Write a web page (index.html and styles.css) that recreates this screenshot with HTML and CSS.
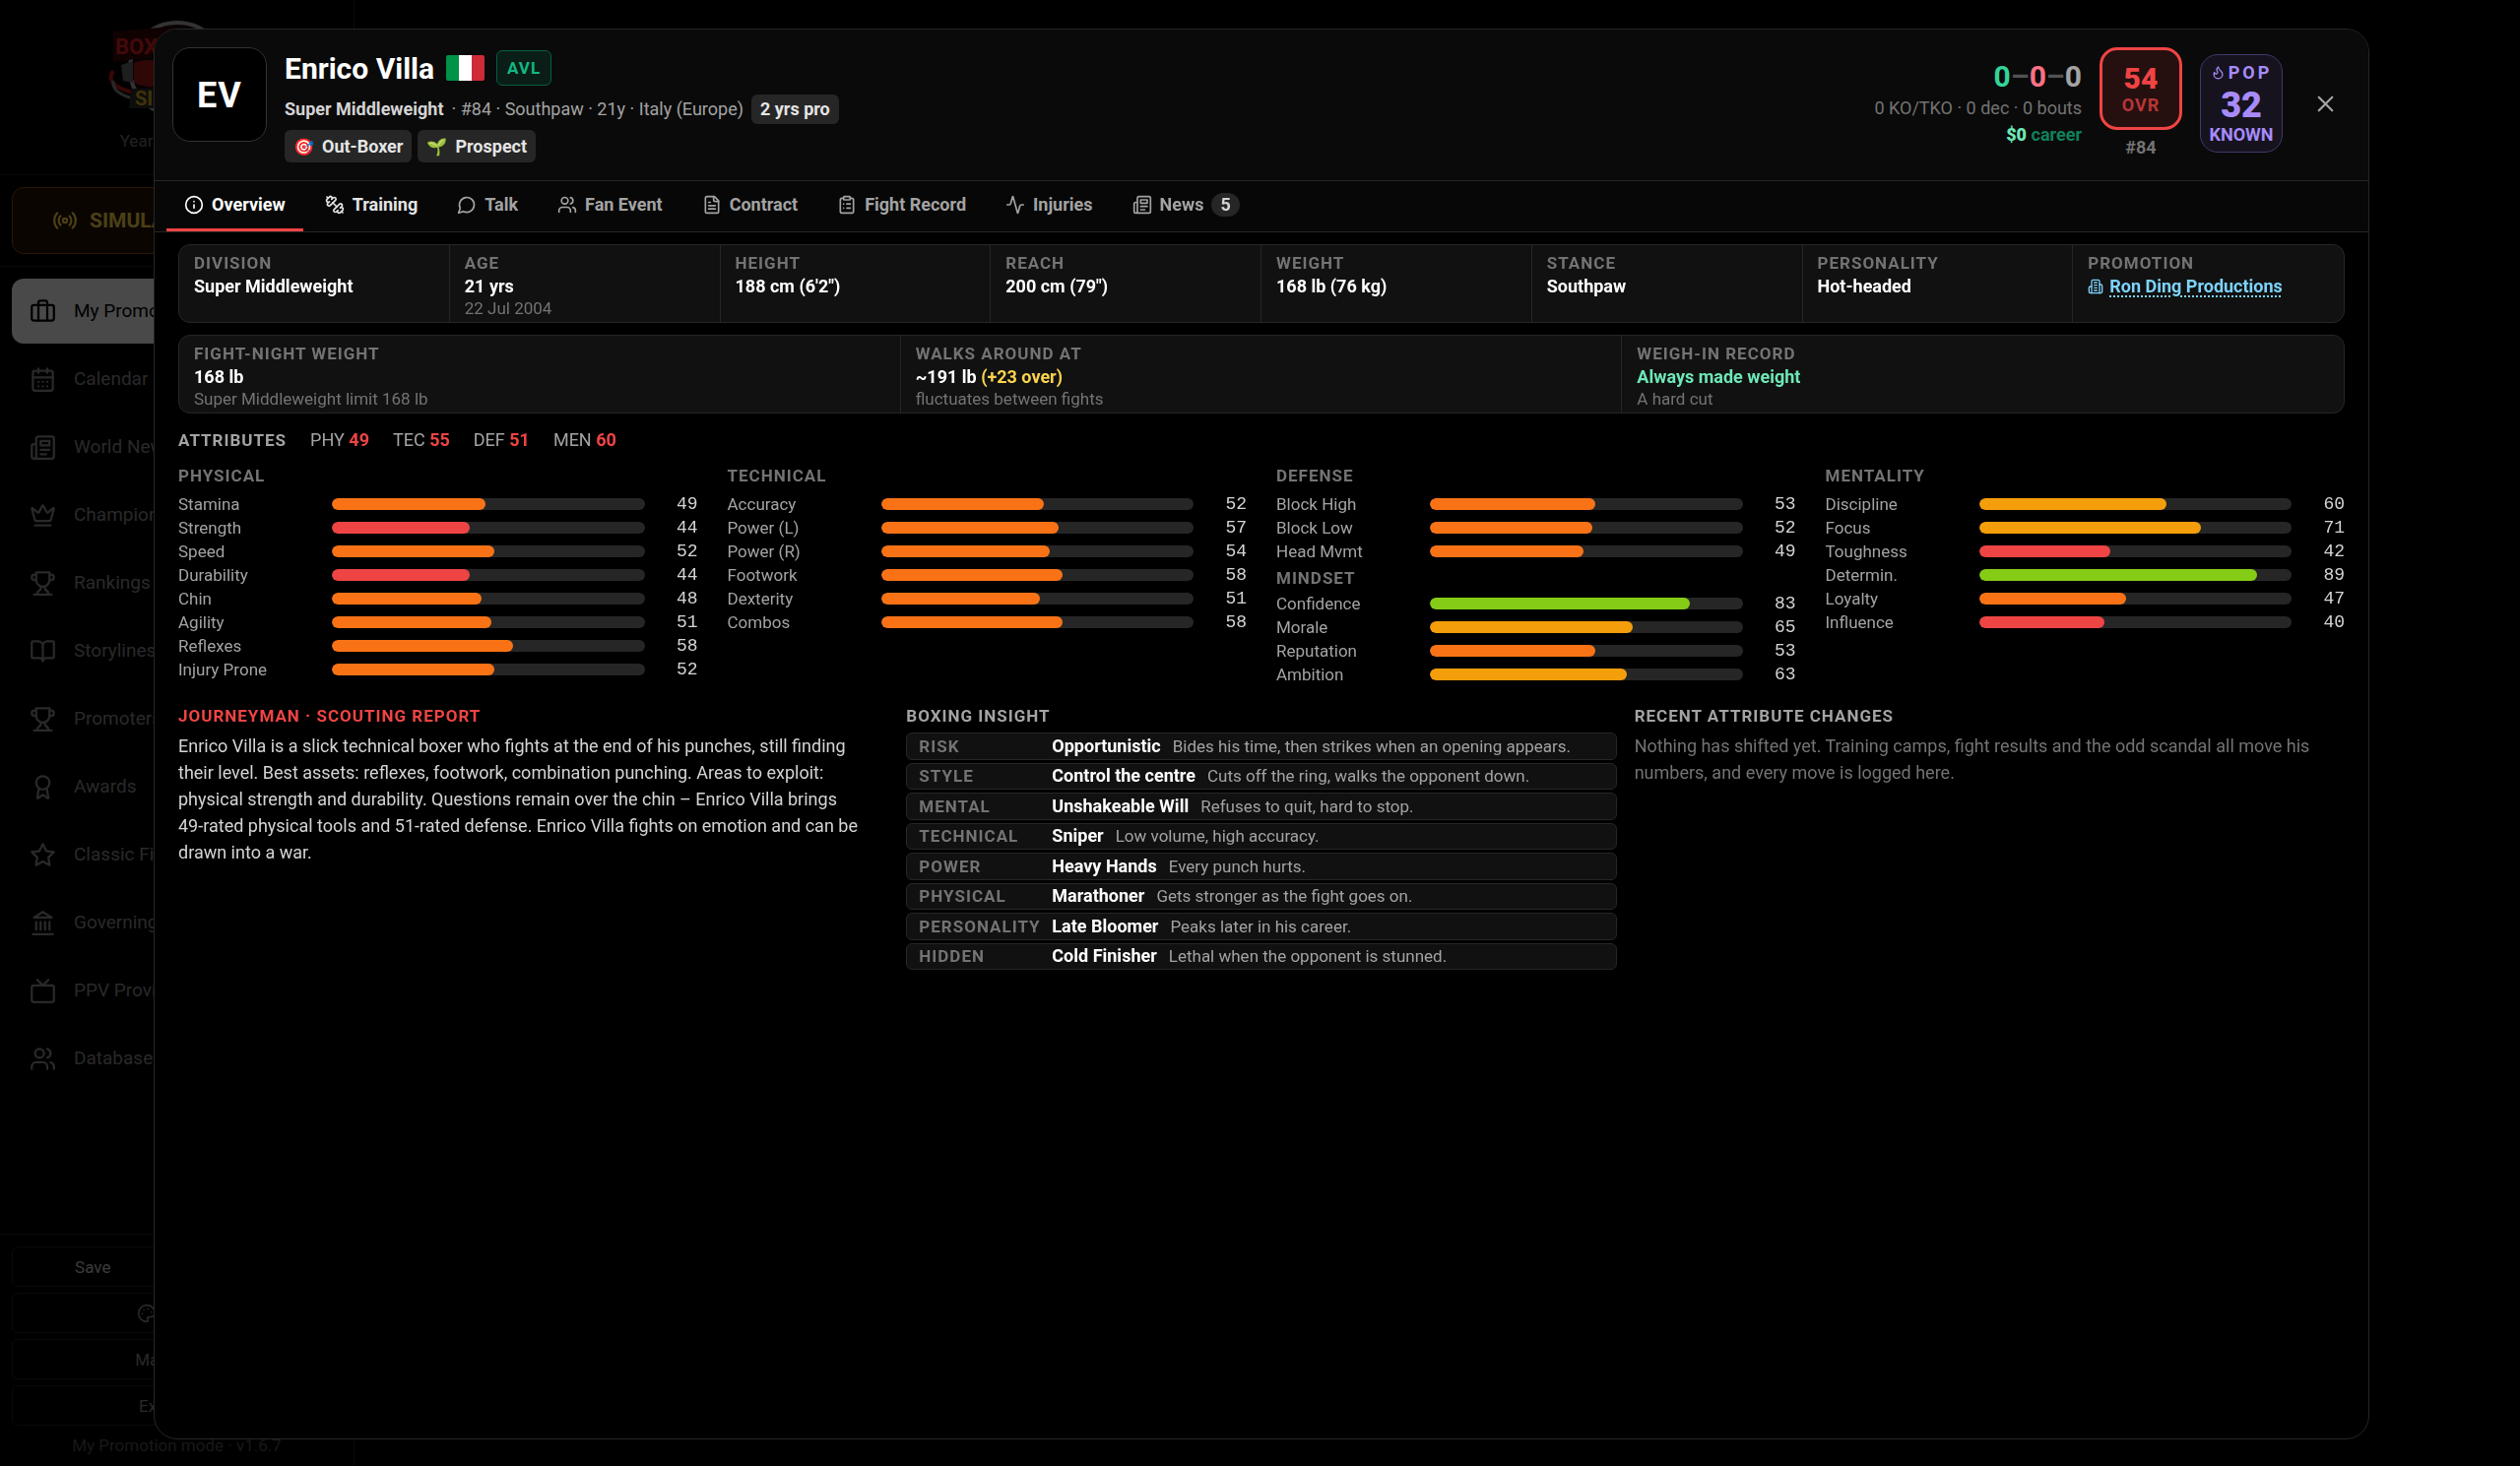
FILE: index.html
```html
<!DOCTYPE html>
<html lang="en">
<head>
    <meta charset="UTF-8">
    <meta name="viewport" content="width=device-width, initial-scale=1.0">
    <title>Enrico Villa - Boxing Sim</title>
    <link rel="stylesheet" href="styles.css">
</head>
<body>
    <!-- Icon sprite -->
    <svg class="sprite" aria-hidden="true">
        <symbol id="i-info" viewBox="0 0 24 24"><circle cx="12" cy="12" r="10"/><path d="M12 16v-4M12 8h.01"/></symbol>
        <symbol id="i-dumbbell" viewBox="0 0 24 24"><path d="M14.4 14.4 9.6 9.6"/><path d="M18.657 21.485a2 2 0 1 1-2.829-2.828l-1.767 1.768a2 2 0 1 1-2.829-2.829l6.364-6.364a2 2 0 1 1 2.829 2.829l-1.768 1.767a2 2 0 1 1 2.828 2.829z"/><path d="m21.5 21.5-1.4-1.4M3.9 3.9 2.5 2.5"/><path d="M6.404 12.768a2 2 0 1 1-2.829-2.829l1.768-1.767a2 2 0 1 1-2.828-2.829l2.828-2.828a2 2 0 1 1 2.829 2.828l1.767-1.768a2 2 0 1 1 2.829 2.829z"/></symbol>
        <symbol id="i-talk" viewBox="0 0 24 24"><path d="M7.9 20A9 9 0 1 0 4 16.1L2 22Z"/></symbol>
        <symbol id="i-users" viewBox="0 0 24 24"><path d="M16 21v-2a4 4 0 0 0-4-4H6a4 4 0 0 0-4 4v2"/><circle cx="9" cy="7" r="4"/><path d="M22 21v-2a4 4 0 0 0-3-3.87M16 3.13a4 4 0 0 1 0 7.75"/></symbol>
        <symbol id="i-file" viewBox="0 0 24 24"><path d="M15 2H6a2 2 0 0 0-2 2v16a2 2 0 0 0 2 2h12a2 2 0 0 0 2-2V7Z"/><path d="M14 2v4a2 2 0 0 0 2 2h4M10 9H8M16 13H8M16 17H8"/></symbol>
        <symbol id="i-clipboard" viewBox="0 0 24 24"><rect x="8" y="2" width="8" height="4" rx="1"/><path d="M16 4h2a2 2 0 0 1 2 2v14a2 2 0 0 1-2 2H6a2 2 0 0 1-2-2V6a2 2 0 0 1 2-2h2M12 11h4M12 16h4M8 11h.01M8 16h.01"/></symbol>
        <symbol id="i-activity" viewBox="0 0 24 24"><path d="M22 12h-2.48a2 2 0 0 0-1.93 1.46l-2.35 8.36a.25.25 0 0 1-.48 0L9.24 2.18a.25.25 0 0 0-.48 0l-2.35 8.36A2 2 0 0 1 4.49 12H2"/></symbol>
        <symbol id="i-news" viewBox="0 0 24 24"><path d="M4 22h16a2 2 0 0 0 2-2V4a2 2 0 0 0-2-2H8a2 2 0 0 0-2 2v16a2 2 0 0 1-2 2Zm0 0a2 2 0 0 1-2-2v-9c0-1.1.9-2 2-2h2M18 14h-8M15 18h-5"/><path d="M10 6h8v4h-8z"/></symbol>
        <symbol id="i-flame" viewBox="0 0 24 24"><path d="M8.5 14.5A2.5 2.5 0 0 0 11 12c0-1.38-.5-2-1-3-1.072-2.143-.224-4.054 2-6 .5 2.5 2 4.9 4 6.5 2 1.6 3 3.5 3 5.5a7 7 0 1 1-14 0c0-1.153.433-2.294 1-3a2.5 2.5 0 0 0 2.5 2.5z"/></symbol>
        <symbol id="i-x" viewBox="0 0 24 24"><path d="M18 6 6 18M6 6l12 12"/></symbol>
        <symbol id="i-building" viewBox="0 0 24 24"><path d="M6 22V4a2 2 0 0 1 2-2h8a2 2 0 0 1 2 2v18Z"/><path d="M6 12H4a2 2 0 0 0-2 2v6a2 2 0 0 0 2 2h2M18 9h2a2 2 0 0 1 2 2v9a2 2 0 0 1-2 2h-2M10 6h4M10 10h4M10 14h4M10 18h4"/></symbol>
        <symbol id="i-radio" viewBox="0 0 24 24"><path d="M4.9 19.1C1 15.2 1 8.8 4.9 4.9M7.8 16.2c-2.3-2.3-2.3-6.1 0-8.5"/><circle cx="12" cy="12" r="2"/><path d="M16.2 7.8c2.3 2.3 2.3 6.1 0 8.5M19.1 4.9C23 8.8 23 15.1 19.1 19"/></symbol>
        <symbol id="i-luggage" viewBox="0 0 24 24"><path d="M16 20V4a2 2 0 0 0-2-2h-4a2 2 0 0 0-2 2v16"/><rect x="2" y="6" width="20" height="14" rx="2"/></symbol>
        <symbol id="i-calendar" viewBox="0 0 24 24"><path d="M8 2v4M16 2v4"/><rect x="3" y="4" width="18" height="18" rx="2"/><path d="M3 10h18M8 14h.01M12 14h.01M16 14h.01M8 18h.01M12 18h.01M16 18h.01"/></symbol>
        <symbol id="i-crown" viewBox="0 0 24 24"><path d="M11.562 3.266a.5.5 0 0 1 .876 0L15.39 8.87a1 1 0 0 0 1.516.294L21.183 5.5a.5.5 0 0 1 .798.519l-2.834 10.246a1 1 0 0 1-.956.734H5.81a1 1 0 0 1-.957-.734L2.02 6.02a.5.5 0 0 1 .798-.519l4.276 3.664a1 1 0 0 0 1.516-.294zM5 21h14"/></symbol>
        <symbol id="i-trophy" viewBox="0 0 24 24"><path d="M6 9H4.500a2.500 2.500 0 0 1 0-5H6M18 9h1.500a2.500 2.500 0 0 0 0-5H18M4 22h16M10 14.660V17c0 .55-.47.98-.97 1.210C7.850 18.750 7 20.240 7 22M14 14.660V17c0 .55.47.98.97 1.210C16.150 18.750 17 20.240 17 22M18 2H6v7a6 6 0 0 0 12 0V2Z"/></symbol>
        <symbol id="i-book" viewBox="0 0 24 24"><path d="M12 7v14M3 18a1 1 0 0 1-1-1V4a1 1 0 0 1 1-1h5a4 4 0 0 1 4 4 4 4 0 0 1 4-4h5a1 1 0 0 1 1 1v13a1 1 0 0 1-1 1h-6a3 3 0 0 0-3 3 3 3 0 0 0-3-3z"/></symbol>
        <symbol id="i-award" viewBox="0 0 24 24"><path d="m15.477 12.890 1.515 8.526a.5.5 0 0 1-.81.470l-3.580-2.687a1 1 0 0 0-1.197 0l-3.586 2.686a.5.5 0 0 1-.81-.469l1.514-8.526"/><circle cx="12" cy="8" r="6"/></symbol>
        <symbol id="i-star" viewBox="0 0 24 24"><path d="m12 2 3.090 6.260L22 9.270l-5 4.870 1.180 6.880L12 17.770l-6.180 3.250L7 14.140 2 9.270l6.910-1.010z"/></symbol>
        <symbol id="i-landmark" viewBox="0 0 24 24"><path d="M3 22h18M6 18v-7M10 18v-7M14 18v-7M18 18v-7M12 2l8 5H4z"/></symbol>
        <symbol id="i-tv" viewBox="0 0 24 24"><rect x="2" y="7" width="20" height="15" rx="2"/><path d="m17 2-5 5-5-5"/></symbol>
        <symbol id="i-palette" viewBox="0 0 24 24"><path d="M13.500 6.500h.01M17.500 10.500h.01M8.500 7.500h.01M6.500 12.500h.01"/><path d="M12 2C6.500 2 2 6.500 2 12s4.500 10 10 10c.926 0 1.648-.746 1.648-1.688 0-.437-.18-.835-.437-1.125-.29-.289-.438-.652-.438-1.125a1.640 1.640 0 0 1 1.668-1.668h1.996c3.051 0 5.555-2.503 5.555-5.554C21.965 6.012 17.461 2 12 2z"/></symbol>
    </svg>

    <!-- Sidebar -->
    <aside class="sidebar">
        <div class="brand">
            <svg class="brand-logo" viewBox="0 0 140 105" role="img" aria-label="Boxing Sim">
                <ellipse cx="70" cy="50" rx="48" ry="47" fill="#200c0c" stroke="#aaa" stroke-width="4"/>
                <path d="M5 52q-10 14 20 22l100 3" fill="none" stroke="#c01818" stroke-width="4"/>
                <path d="M5 62q-2 12 20 18" fill="none" stroke="#888" stroke-width="3"/>
                <path d="M13 46l12-4v22l-10-2z" fill="#666"/>
                <path d="M26 44q14-6 34 0v24q-20 2-34-4z" fill="#a01a1a"/>
                <path d="M5 12l60-5v28l-60 8z" fill="#3a0808"/>
                <text x="7" y="35" class="logo-red">BOXING</text>
                <path d="M23 70h90v20H21z" fill="#2c2c2c"/>
                <text x="27" y="87" class="logo-gold">SIM</text>
            </svg>
            <p class="brand-year">Year 1 · Week 1</p>
        </div>
        <div class="simulate">
            <button type="button" class="simulate-btn"><svg class="icon"><use href="#i-radio"/></svg>SIMULATE WEEK</button>
        </div>
        <nav class="menu">
            <a href="#" class="active"><svg class="icon"><use href="#i-luggage"/></svg>My Promotion</a>
            <a href="#"><svg class="icon"><use href="#i-calendar"/></svg>Calendar</a>
            <a href="#"><svg class="icon"><use href="#i-news"/></svg>World News</a>
            <a href="#"><svg class="icon"><use href="#i-crown"/></svg>Champions</a>
            <a href="#"><svg class="icon"><use href="#i-trophy"/></svg>Rankings</a>
            <a href="#"><svg class="icon"><use href="#i-book"/></svg>Storylines</a>
            <a href="#"><svg class="icon"><use href="#i-trophy"/></svg>Promoters</a>
            <a href="#"><svg class="icon"><use href="#i-award"/></svg>Awards</a>
            <a href="#"><svg class="icon"><use href="#i-star"/></svg>Classic Fights</a>
            <a href="#"><svg class="icon"><use href="#i-landmark"/></svg>Governing Bodies</a>
            <a href="#"><svg class="icon"><use href="#i-tv"/></svg>PPV Providers</a>
            <a href="#"><svg class="icon"><use href="#i-users"/></svg>Database</a>
        </nav>
        <div class="side-footer">
            <div class="save-row">
                <button type="button" class="save-btn">Save</button>
                <button type="button">Load</button>
            </div>
            <button type="button"><svg class="icon"><use href="#i-palette"/></svg>Theme</button>
            <button type="button">Main Menu</button>
            <button type="button">Exit Game</button>
            <p>My Promotion mode · v1.6.7</p>
        </div>
    </aside>

    <!-- Fighter modal -->
    <div class="overlay">
        <main class="modal">
            <header class="head">
                <div class="avatar">EV</div>
                <div class="who">
                    <div class="name-row">
                        <h1>Enrico Villa</h1>
                        <span class="flag" role="img" aria-label="Italy"></span>
                        <span class="avl">AVL</span>
                    </div>
                    <div class="meta-row">
                        <strong>Super Middleweight</strong>
                        <span>· #84 · Southpaw · 21y · Italy (Europe)</span>
                        <span class="tag">2 yrs pro</span>
                    </div>
                    <div class="chips">
                        <span class="chip"><i>🎯</i>Out-Boxer</span>
                        <span class="chip"><i>🌱</i>Prospect</span>
                    </div>
                </div>
                <div class="summary">
                    <div class="record">
                        <p class="wld"><span class="w">0</span>–<span class="l">0</span>–<span class="d">0</span></p>
                        <p class="bouts">0 KO/TKO · 0 dec · 0 bouts</p>
                        <p class="career"><b>$0</b> career</p>
                    </div>
                    <div class="ovr">
                        <div class="ovr-box"><b>54</b><span>OVR</span></div>
                        <p>#84</p>
                    </div>
                    <div class="pop">
                        <span class="pop-label"><svg class="icon"><use href="#i-flame"/></svg>POP</span>
                        <b>32</b>
                        <span class="pop-tier">KNOWN</span>
                    </div>
                    <button type="button" class="close" aria-label="Close"><svg class="icon"><use href="#i-x"/></svg></button>
                </div>
            </header>

            <nav class="tabs">
                <button type="button" class="active"><svg class="icon"><use href="#i-info"/></svg>Overview</button>
                <button type="button" class="bright"><svg class="icon"><use href="#i-dumbbell"/></svg>Training</button>
                <button type="button"><svg class="icon"><use href="#i-talk"/></svg>Talk</button>
                <button type="button"><svg class="icon"><use href="#i-users"/></svg>Fan Event</button>
                <button type="button"><svg class="icon"><use href="#i-file"/></svg>Contract</button>
                <button type="button"><svg class="icon"><use href="#i-clipboard"/></svg>Fight Record</button>
                <button type="button"><svg class="icon"><use href="#i-activity"/></svg>Injuries</button>
                <button type="button"><svg class="icon"><use href="#i-news"/></svg>News<span class="count">5</span></button>
            </nav>

            <div class="body">
                <dl class="facts facts-8">
                    <div><dt>DIVISION</dt><dd>Super Middleweight</dd></div>
                    <div><dt>AGE</dt><dd>21 yrs</dd><dd class="sub">22 Jul 2004</dd></div>
                    <div><dt>HEIGHT</dt><dd>188 cm (6'2")</dd></div>
                    <div><dt>REACH</dt><dd>200 cm (79")</dd></div>
                    <div><dt>WEIGHT</dt><dd>168 lb (76 kg)</dd></div>
                    <div><dt>STANCE</dt><dd>Southpaw</dd></div>
                    <div><dt>PERSONALITY</dt><dd>Hot-headed</dd></div>
                    <div><dt>PROMOTION</dt><dd class="promo"><svg class="icon"><use href="#i-building"/></svg><a href="#">Ron Ding Productions</a></dd></div>
                </dl>
                <dl class="facts facts-3">
                    <div><dt>FIGHT-NIGHT WEIGHT</dt><dd>168 lb</dd><dd class="sub">Super Middleweight limit 168 lb</dd></div>
                    <div><dt>WALKS AROUND AT</dt><dd>~191 lb <span class="over">(+23 over)</span></dd><dd class="sub">fluctuates between fights</dd></div>
                    <div><dt>WEIGH-IN RECORD</dt><dd class="good">Always made weight</dd><dd class="sub">A hard cut</dd></div>
                </dl>

                <div class="attr-head">
                    <h2>ATTRIBUTES</h2>
                    <span>PHY <b>49</b></span>
                    <span>TEC <b>55</b></span>
                    <span>DEF <b>51</b></span>
                    <span>MEN <b>60</b></span>
                </div>
                <div class="attrs" id="attrs"></div>

                <div class="reports">
                    <section>
                        <h2 class="red">JOURNEYMAN · SCOUTING REPORT</h2>
                        <p class="scout">
                            Enrico Villa is a slick technical boxer who fights at the end of his punches, still finding<br>
                            their level. Best assets: reflexes, footwork, combination punching. Areas to exploit:<br>
                            physical strength and durability. Questions remain over the chin – Enrico Villa brings<br>
                            49-rated physical tools and 51-rated defense. Enrico Villa fights on emotion and can be<br>
                            drawn into a war.
                        </p>
                    </section>
                    <section>
                        <h2>BOXING INSIGHT</h2>
                        <ul class="insight">
                            <li><span>RISK</span><b>Opportunistic</b><em>Bides his time, then strikes when an opening appears.</em></li>
                            <li><span>STYLE</span><b>Control the centre</b><em>Cuts off the ring, walks the opponent down.</em></li>
                            <li><span>MENTAL</span><b>Unshakeable Will</b><em>Refuses to quit, hard to stop.</em></li>
                            <li><span>TECHNICAL</span><b>Sniper</b><em>Low volume, high accuracy.</em></li>
                            <li><span>POWER</span><b>Heavy Hands</b><em>Every punch hurts.</em></li>
                            <li><span>PHYSICAL</span><b>Marathoner</b><em>Gets stronger as the fight goes on.</em></li>
                            <li><span>PERSONALITY</span><b>Late Bloomer</b><em>Peaks later in his career.</em></li>
                            <li><span>HIDDEN</span><b>Cold Finisher</b><em>Lethal when the opponent is stunned.</em></li>
                        </ul>
                    </section>
                    <section>
                        <h2>RECENT ATTRIBUTE CHANGES</h2>
                        <p class="empty">Nothing has shifted yet. Training camps, fight results and the odd scandal all move his numbers, and every move is logged here.</p>
                    </section>
                </div>
            </div>
        </main>
    </div>

    <script>
        // Attribute columns, each one holds one or more groups
        const columns = [
            [['PHYSICAL', [['Stamina', 49], ['Strength', 44], ['Speed', 52], ['Durability', 44], ['Chin', 48], ['Agility', 51], ['Reflexes', 58], ['Injury Prone', 52]]]],
            [['TECHNICAL', [['Accuracy', 52], ['Power (L)', 57], ['Power (R)', 54], ['Footwork', 58], ['Dexterity', 51], ['Combos', 58]]]],
            [['DEFENSE', [['Block High', 53], ['Block Low', 52], ['Head Mvmt', 49]]],
             ['MINDSET', [['Confidence', 83], ['Morale', 65], ['Reputation', 53], ['Ambition', 63]]]],
            [['MENTALITY', [['Discipline', 60], ['Focus', 71], ['Toughness', 42], ['Determin.', 89], ['Loyalty', 47], ['Influence', 40]]]]
        ];

        const tier = v => v >= 75 ? 'high' : v >= 60 ? 'good' : v >= 45 ? 'mid' : 'low';

        document.getElementById('attrs').innerHTML = columns.map(groups =>
            '<div class="attr-col">' + groups.map(([title, rows]) =>
                `<h3>${title}</h3>` + rows.map(([name, v]) =>
                    `<div class="attr"><span>${name}</span><div class="bar"><div class="fill ${tier(v)}" style="width:${v}%"></div></div><b>${v}</b></div>`
                ).join('')
            ).join('') + '</div>'
        ).join('');
    </script>
</body>
</html>
```
FILE: styles.css
```css
* {
    margin: 0;
    padding: 0;
    box-sizing: border-box;
}

body {
    min-height: 100vh;
    overflow: hidden;
    background: #000;
    color: #fff;
    font-family: Roboto, 'Liberation Sans', sans-serif;
    font-size: 18px;
    line-height: 24px;
}

button {
    font: inherit;
    color: inherit;
    background: none;
    border: none;
    cursor: pointer;
}

a {
    color: inherit;
    text-decoration: none;
}

.sprite {
    display: none;
}

.icon {
    flex: none;
    width: 20px;
    height: 20px;
    fill: none;
    stroke: currentColor;
    stroke-width: 2;
    stroke-linecap: round;
    stroke-linejoin: round;
}

/* Sidebar */
.sidebar {
    display: flex;
    flex-direction: column;
    width: 360px;
    height: 100vh;
    border-right: 1px solid #262626;
}

.brand {
    padding: 20px 0 22px;
    border-bottom: 1px solid #262626;
    text-align: center;
}

.brand-logo {
    display: block;
    width: 140px;
    height: 105px;
    margin: 0 auto 6px;
}

.logo-red,
.logo-gold {
    font-size: 22px;
    font-weight: bold;
    fill: #e02020;
}

.logo-gold {
    font-size: 20px;
    fill: #d4a820;
}

.brand-year {
    color: #737373;
    font-size: 17px;
}

.simulate {
    padding: 12px;
    border-bottom: 1px solid #262626;
}

.simulate-btn {
    display: flex;
    align-items: center;
    gap: 12px;
    width: 100%;
    height: 68px;
    padding: 0 40px;
    border: 1px solid #8a4a10;
    border-radius: 12px;
    background: #221200;
    color: #fcd34d;
    font-size: 21px;
    font-weight: bold;
}

.simulate-btn .icon {
    width: 26px;
    height: 26px;
}

.menu {
    display: flex;
    flex-direction: column;
    flex: 1;
    gap: 3px;
    padding: 12px;
}

.menu a {
    display: flex;
    align-items: center;
    gap: 18px;
    height: 66px;
    padding: 0 18px;
    border-radius: 12px;
    color: #8a8a8a;
    font-size: 19px;
}

.menu .active {
    background: #f5f5f5;
    color: #000;
}

.menu .icon {
    width: 27px;
    height: 27px;
}

.side-footer {
    display: flex;
    flex-direction: column;
    gap: 6px;
    padding: 12px 12px 9px;
    border-top: 1px solid #262626;
}

.side-footer button {
    display: flex;
    align-items: center;
    justify-content: center;
    gap: 8px;
    flex: 1;
    min-height: 41px;
    border: 1px solid #262626;
    border-radius: 6px;
    color: #8a8a8a;
    font-size: 17px;
}

.side-footer .save-btn {
    color: #c4c4c4;
}

.side-footer p {
    padding-top: 2px;
    color: #525252;
    font-size: 17px;
    text-align: center;
}

.save-row {
    display: flex;
    gap: 6px;
}

/* Modal */
.overlay {
    position: fixed;
    inset: 0;
    padding: 29px 153px 27px 156px;
    background: rgba(0, 0, 0, 0.7);
}

.modal {
    display: flex;
    flex-direction: column;
    height: 100%;
    overflow: hidden;
    border: 1px solid #262626;
    border-radius: 24px;
    background: #000;
}

.head {
    display: flex;
    align-items: flex-start;
    gap: 18px;
    padding: 18px;
    border-bottom: 1px solid #262626;
    background: #0a0a0a;
}

.avatar {
    display: flex;
    align-items: center;
    justify-content: center;
    width: 96px;
    height: 96px;
    padding-top: 2px;
    border: 1px solid #333;
    border-radius: 18px;
    background: #000;
    font-size: 36px;
    font-weight: bold;
    letter-spacing: 1px;
}

.who {
    display: flex;
    flex-direction: column;
    gap: 6px;
}

.name-row {
    display: flex;
    align-items: center;
    gap: 12px;
    height: 42px;
}

h1 {
    padding-top: 2px;
    font-size: 30px;
    line-height: 36px;
}

.flag {
    width: 39px;
    height: 26px;
    border-radius: 2px;
    background: linear-gradient(90deg, #009246 33%, #fff 33% 67%, #ce2b37 67%);
}

.avl {
    padding: 5px 10px;
    border: 1px solid #065f46;
    border-radius: 6px;
    background: #0a1d17;
    color: #10b981;
    font-size: 17px;
    font-weight: bold;
    letter-spacing: 1px;
}

.meta-row {
    display: flex;
    align-items: center;
    gap: 8px;
    color: #a3a3a3;
}

.meta-row strong {
    color: #d4d4d4;
}

.tag {
    padding: 3px 9px;
    border-radius: 6px;
    background: #262626;
    color: #e5e5e5;
    font-weight: bold;
}

.chips {
    display: flex;
    gap: 6px;
}

.chip {
    display: flex;
    align-items: center;
    gap: 8px;
    height: 33px;
    padding: 0 9px;
    border-radius: 6px;
    background: #262626;
    color: #e5e5e5;
    font-weight: bold;
}

.chip i {
    font-size: 17px;
    font-style: normal;
}

/* Record, rating and popularity */
.summary {
    display: flex;
    align-items: center;
    gap: 18px;
    margin-left: auto;
}

.record {
    color: #737373;
    text-align: right;
}

.wld {
    color: #525252;
    font-size: 30px;
    font-weight: bold;
    line-height: 36px;
}

.w {
    color: #34d399;
}

.l {
    color: #fb7185;
}

.d {
    color: #a3a3a3;
}

.bouts,
.career {
    line-height: 27px;
}

.career {
    color: #10805a;
    font-weight: bold;
}

.career b {
    color: #6ee7b7;
}

.ovr {
    color: #737373;
    font-weight: bold;
    text-align: center;
}

.ovr-box {
    display: flex;
    flex-direction: column;
    align-items: center;
    justify-content: center;
    width: 84px;
    height: 84px;
    margin-bottom: 6px;
    padding-top: 3px;
    border: 3px solid #ef4444;
    border-radius: 18px;
    background: #260f0f;
    color: #ef4444;
}

.ovr-box b {
    font-size: 30px;
    line-height: 30px;
}

.ovr-box span {
    color: #b73636;
    letter-spacing: 1px;
}

.pop {
    display: flex;
    flex-direction: column;
    align-items: center;
    justify-content: center;
    width: 84px;
    height: 100px;
    border: 1px solid #44386b;
    border-radius: 18px;
    background: #16131f;
    color: #a78bfa;
    font-weight: bold;
}

.pop b {
    padding-top: 3px;
    font-size: 36px;
    line-height: 36px;
}

.pop-label {
    display: flex;
    align-items: center;
    gap: 3px;
    letter-spacing: 3px;
}

.pop-label .icon {
    width: 15px;
    height: 15px;
}

.close {
    display: flex;
    align-items: center;
    justify-content: center;
    width: 51px;
    height: 51px;
    color: #a3a3a3;
}

.close .icon {
    width: 27px;
    height: 27px;
}

/* Tabs */
.tabs {
    display: flex;
    gap: 4px;
    padding: 0 12px;
    border-bottom: 1px solid #262626;
    background: #070707;
}

.tabs button {
    display: flex;
    align-items: center;
    gap: 8px;
    height: 51px;
    padding: 0 18px;
    border-bottom: 3px solid transparent;
    color: #a3a3a3;
    font-weight: bold;
}

.tabs .active {
    border-color: #ef4444;
    color: #fff;
}

.tabs .bright {
    color: #e5e5e5;
}

.count {
    padding: 0 9px;
    border-radius: 12px;
    background: #262626;
    color: #d4d4d4;
}

.body {
    display: flex;
    flex-direction: column;
    gap: 12px;
    padding: 12px 24px;
}

/* Fact strips */
.facts {
    display: grid;
    overflow: hidden;
    border: 1px solid #262626;
    border-radius: 12px;
    background: #111;
}

.facts-8 {
    grid-template-columns: repeat(8, 1fr);
}

.facts-3 {
    grid-template-columns: repeat(3, 1fr);
}

.facts > div {
    padding: 6px 15px 3px;
    border-right: 1px solid #262626;
}

.facts > div:last-child {
    border-right: none;
}

dt,
h2,
h3 {
    font-size: 17px;
    font-weight: bold;
    line-height: 24px;
    letter-spacing: 1px;
}

dt,
h3 {
    color: #737373;
}

h2 {
    color: #a3a3a3;
}

dd {
    font-weight: bold;
}

.sub {
    color: #737373;
    font-size: 17px;
    font-weight: normal;
    line-height: 21px;
}

.over {
    color: #fcd34d;
}

.good {
    color: #6ee7b7;
}

.promo {
    display: flex;
    align-items: center;
    gap: 6px;
    color: #7dd3fc;
}

.promo .icon {
    width: 16px;
    height: 16px;
}

.promo a {
    text-decoration: underline dotted;
    text-underline-offset: 4px;
}

/* Attributes */
.attr-head {
    display: flex;
    align-items: center;
    gap: 24px;
    line-height: 30px;
    color: #a3a3a3;
}

.attr-head b {
    color: #ef4444;
}

.attrs {
    display: grid;
    grid-template-columns: repeat(4, 1fr);
    gap: 30px;
    margin-top: -3px;
}

.attr-col h3 {
    margin-bottom: 5px;
}

.attr + h3 {
    margin: 3px 0 2px;
}

.attr {
    display: grid;
    grid-template-columns: 144px 1fr 42px;
    align-items: center;
    gap: 12px;
    height: 24px;
    color: #a3a3a3;
    font-size: 17px;
}

.attr b {
    color: #d4d4d4;
    font-family: 'Liberation Mono', monospace;
    font-size: 18px;
    font-weight: normal;
    text-align: right;
}

.bar {
    height: 12px;
    overflow: hidden;
    border-radius: 6px;
    background: #262626;
}

.fill {
    height: 100%;
    border-radius: 6px;
}

.low {
    background: #ef4444;
}

.mid {
    background: #f97316;
}

.good.fill {
    background: #f59e0b;
}

.high {
    background: #84cc16;
}

/* Reports */
.reports {
    display: grid;
    grid-template-columns: repeat(3, 1fr);
    gap: 18px;
    margin-top: 6px;
}

.reports h2 {
    margin-bottom: 5px;
}

.reports .red {
    color: #ef4444;
}

.scout,
.empty {
    color: #d4d4d4;
    line-height: 27px;
}

.empty {
    color: #737373;
}

.insight {
    display: grid;
    grid-auto-rows: 1fr;
    gap: 3px;
    min-height: 241px;
    list-style: none;
}

.insight li {
    display: flex;
    align-items: center;
    gap: 12px;
    padding: 0 12px;
    border: 1px solid #262626;
    border-radius: 6px;
    background: #111;
}

.insight span {
    width: 123px;
    color: #737373;
    font-size: 17px;
    font-weight: bold;
    letter-spacing: 1px;
}

.insight em {
    color: #a3a3a3;
    font-size: 17px;
    font-style: normal;
}
```
